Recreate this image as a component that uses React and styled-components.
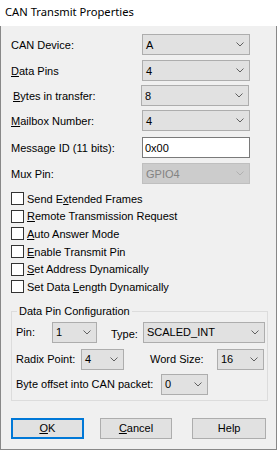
import React from 'react';
import styled, { createGlobalStyle } from 'styled-components';

const Global = createGlobalStyle`
  html, body { margin: 0; padding: 0; background: #f0f0f0; }
  #root { width: 277px; height: 450px; }
  * { box-sizing: border-box; }
`;

const Window = styled.div`
  width: 277px;
  height: 450px;
  display: flex;
  flex-direction: column;
  font-family: "Liberation Sans", Arial, sans-serif;
  font-size: 11px;
  color: #000;
`;

const TitleBar = styled.div`
  height: 26px;
  flex: none;
  background: #fff;
  padding-left: 5px;
  font-family: "Noto Sans", "Open Sans", sans-serif;
  font-size: 11.2px;
  line-height: 24px;
  color: #000;
`;

const Body = styled.div`
  flex: 1;
  background: #f0f0f0;
  border: 1px solid #888;
  border-top: none;
  padding: 8px 10px 0 10px;
  display: flex;
  flex-direction: column;
`;

const FieldRow = styled.div`
  display: flex;
  align-items: center;
  height: 21px;
  margin-top: ${(p) => p.$mt || 0}px;
`;

const Label = styled.span`
  width: ${(p) => p.$w}px;
  flex: none;
  padding-left: ${(p) => p.$pl || 0}px;
  margin-left: ${(p) => p.$ml || 0}px;
  margin-top: ${(p) => p.$dy || 0}px;
  white-space: nowrap;
`;

const Key = styled.span`
  text-decoration: underline;
  text-underline-offset: 1px;
`;

const Combo = styled.div`
  width: ${(p) => p.$w}px;
  height: 21px;
  flex: none;
  display: flex;
  align-items: center;
  padding-left: 3px;
  padding-right: 5px;
  background: ${(p) => (p.$disabled ? '#cccccc' : '#e1e1e1')};
  border: 1px solid ${(p) => (p.$disabled ? '#bfbfbf' : '#adadad')};
  color: ${(p) => (p.$disabled ? '#838383' : '#000')};
  white-space: nowrap;
`;

const ComboText = styled.span`
  flex: 1;
`;

const Edit = styled.div`
  width: 108px;
  height: 21px;
  flex: none;
  display: flex;
  align-items: center;
  padding-left: 2px;
  background: #fff;
  border: 1px solid #7a7a7a;
`;

const CheckRow = styled.label`
  display: flex;
  align-items: center;
  height: 17.6px;
  margin-top: ${(p) => p.$mt || 0}px;
`;

const Box = styled.span`
  width: 13px;
  height: 13px;
  flex: none;
  background: #fff;
  border: 1px solid #333;
  margin-right: 3px;
`;

const Group = styled.fieldset`
  margin: 9px -2px 0 0;
  padding: 0 4px 5px 4px;
  border: 1px solid #dcdcdc;
  min-width: 0;
`;

const Legend = styled.legend`
  padding: 0 2px;
  margin-left: 1px;
  line-height: 13px;
`;

const ButtonRow = styled.div`
  display: flex;
  margin-top: 17px;
`;

const Button = styled.div`
  width: ${(p) => p.$w}px;
  height: 21px;
  margin-left: ${(p) => p.$ml || 0}px;
  display: flex;
  align-items: center;
  justify-content: center;
  background: #e1e1e1;
  border: ${(p) => (p.$default ? '2px solid #0078d7' : '1px solid #adadad')};
`;

const Chevron = ({ color }) => (
  <svg width="8" height="5" viewBox="0 0 8 5" style={{ flex: 'none' }}>
    <polyline points="0.5,0.5 4,4 7.5,0.5" fill="none" stroke={color || '#606060'} strokeWidth="1" />
  </svg>
);

const ComboBox = ({ w, value, disabled }) => (
  <Combo $w={w} $disabled={disabled}>
    <ComboText>{value}</ComboText>
    <Chevron color={disabled ? '#b0b0b0' : '#606060'} />
  </Combo>
);

const checks = [
  ['Send E', 'x', 'tended Frames'],
  ['', 'R', 'emote Transmission Request'],
  ['', 'A', 'uto Answer Mode'],
  ['', 'E', 'nable Transmit Pin'],
  ['', 'S', 'et Address Dynamically'],
  ['Set Data ', 'L', 'ength Dynamically'],
];

export default function App() {
  return (
    <>
      <Global />
      <Window>
        <TitleBar>CAN Transmit Properties</TitleBar>
        <Body>
          <FieldRow>
            <Label $w={131}>CAN Device:</Label>
            <ComboBox w={108} value="A" />
          </FieldRow>
          <FieldRow $mt={5}>
            <Label $w={131}><Key>D</Key>ata Pins</Label>
            <ComboBox w={108} value="4" />
          </FieldRow>
          <FieldRow $mt={4}>
            <Label $w={130} $pl={2}><Key>B</Key>ytes in transfer:</Label>
            <ComboBox w={108} value="8" />
          </FieldRow>
          <FieldRow $mt={4}>
            <Label $w={131}><Key>M</Key>ailbox Number:</Label>
            <ComboBox w={108} value="4" />
          </FieldRow>
          <FieldRow $mt={6}>
            <Label $w={131}>Message ID (11 bits):</Label>
            <Edit>0x00</Edit>
          </FieldRow>
          <FieldRow $mt={5}>
            <Label $w={131}>Mux Pin:</Label>
            <ComboBox w={108} value="GPIO4" disabled />
          </FieldRow>
          {checks.map(([a, k, b], i) => (
            <CheckRow key={i} $mt={i === 0 ? 6 : 0}>
              <Box />
              <span>{a}<Key>{k}</Key>{b}</span>
            </CheckRow>
          ))}
          <Group>
            <Legend>Data Pin Configuration</Legend>
            <FieldRow $mt={4}>
              <Label $w={36}>Pin:</Label>
              <ComboBox w={45} value="1" />
              <Label $w={32} $ml={14} $dy={3}>Type:</Label>
              <ComboBox w={122} value="SCALED_INT" />
            </FieldRow>
            <FieldRow $mt={6}>
              <Label $w={65}>Radix Point:</Label>
              <ComboBox w={43} value="4" />
              <Label $w={67} $ml={26}>Word Size:</Label>
              <ComboBox w={47} value="16" />
            </FieldRow>
            <FieldRow $mt={4}>
              <Label $w={145}>Byte offset into CAN packet:</Label>
              <ComboBox w={47} value="0" />
            </FieldRow>
          </Group>
          <ButtonRow>
            <Button $w={73} $default><span><Key>O</Key>K</span></Button>
            <Button $w={73} $ml={16}><span><Key>C</Key>ancel</span></Button>
            <Button $w={74} $ml={20}>Help</Button>
          </ButtonRow>
        </Body>
      </Window>
    </>
  );
}
